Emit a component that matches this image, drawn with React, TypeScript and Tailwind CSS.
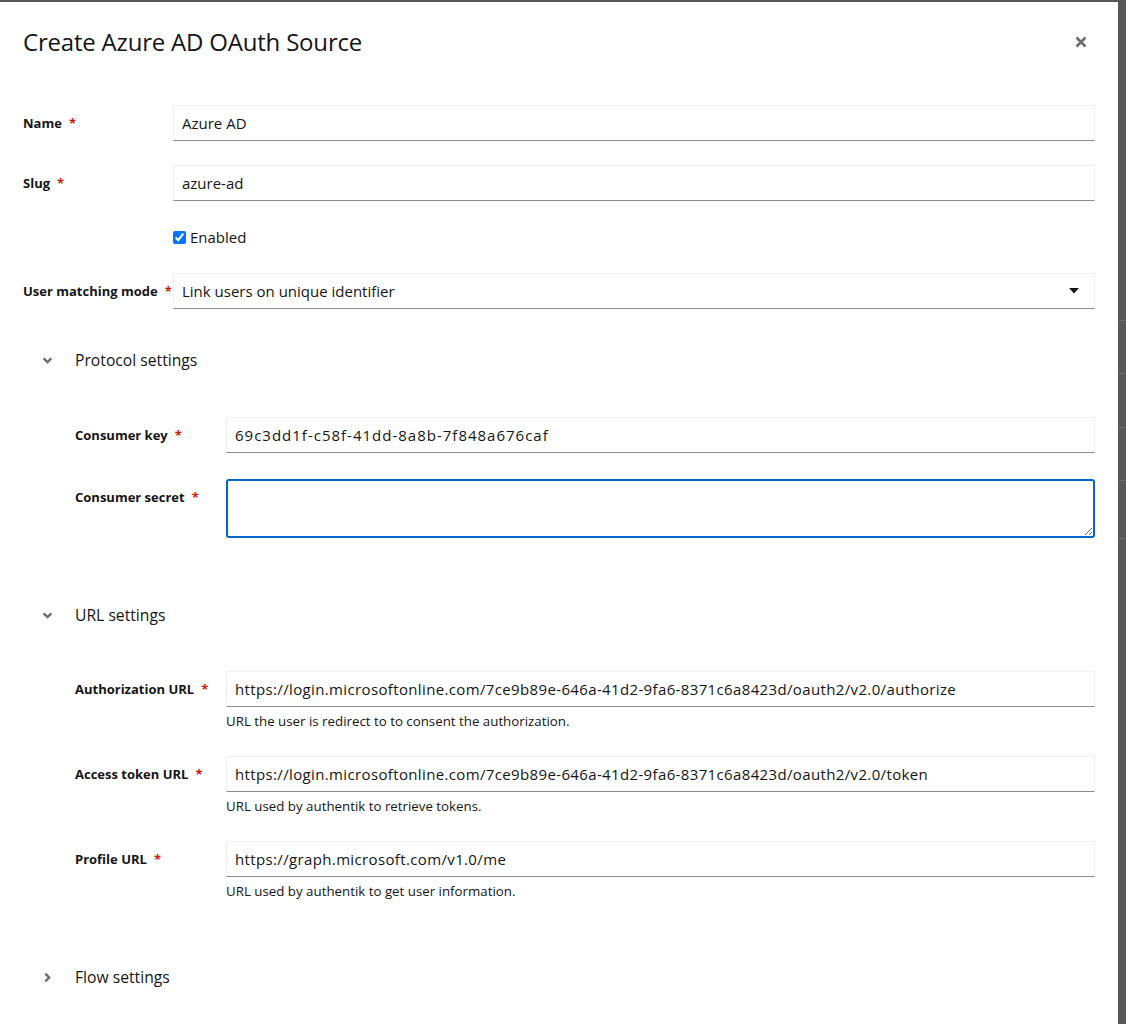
import { ReactNode } from "react";

const font = { fontFamily: '"Open Sans", "Liberation Sans", sans-serif' };

function Req() {
  return <span className="ml-[7px] text-[#c9190b]">*</span>;
}

function Label({ children, w }: { children: ReactNode; w: string }) {
  return (
    <div className={`${w} shrink-0 pt-2 text-[13px] font-bold leading-[20px] text-[#151515]`}>
      {children}
      <Req />
    </div>
  );
}

function TextInput({ value, track = "" }: { value: string; track?: string }) {
  return (
    <div
      className={`flex h-[36px] w-full items-center border border-[#f0f0f0] border-b-[#8a8d90] px-2 text-[15px] text-[#151515] ${track}`}
    >
      {value}
    </div>
  );
}

function Helper({ children }: { children: ReactNode }) {
  return <div className="mt-[5px] text-[13.3px] leading-[18px] text-[#151515]">{children}</div>;
}

function Chevron({ open }: { open: boolean }) {
  return (
    <svg width="11" height="11" viewBox="0 0 10 10" className="text-[#6a6e73]">
      {open ? (
        <path d="M1.5 3 L5 6.5 L8.5 3" fill="none" stroke="currentColor" strokeWidth="2.2" />
      ) : (
        <path d="M3 1.5 L6.5 5 L3 8.5" fill="none" stroke="currentColor" strokeWidth="2.2" />
      )}
    </svg>
  );
}

function Section({ title, open }: { title: string; open: boolean }) {
  return (
    <div className="flex h-[36px] items-center pt-[1px]">
      <div className="flex w-[52px] justify-center pr-[4px]">
        <Chevron open={open} />
      </div>
      <span className="text-[15.7px] text-[#151515]">{title}</span>
    </div>
  );
}

function UrlRow({ label, value, help }: { label: string; value: string; help: string }) {
  return (
    <div className="flex">
      <Label w="w-[151px]">{label}</Label>
      <div className="flex min-w-0 flex-1 flex-col">
        <TextInput value={value} track="tracking-[0.36px]" />
        <Helper>{help}</Helper>
      </div>
    </div>
  );
}

export default function App() {
  return (
    <div className="flex h-[1024px] w-[1126px] bg-[#585858] pt-[2px]" style={font}>
      <div className="flex w-[1118px] flex-col bg-white px-[23px]">
        <div className="flex items-center justify-between pt-[22px]">
          <h1 className="text-[24px] font-medium leading-[36px] tracking-[-0.2px] text-[#151515]">
            Create Azure AD OAuth Source
          </h1>
          <svg width="12" height="12" viewBox="0 0 12 12" className="mr-[8px] text-[#6a6e73]">
            <path d="M1.5 1.5 L10.5 10.5 M10.5 1.5 L1.5 10.5" stroke="currentColor" strokeWidth="2.6" />
          </svg>
        </div>

        <div className="mt-[45px] flex flex-col gap-6">
          <div className="flex">
            <Label w="w-[150px]">Name</Label>
            <TextInput value="Azure AD" />
          </div>
          <div className="flex">
            <Label w="w-[150px]">Slug</Label>
            <TextInput value="azure-ad" />
          </div>
          <div className="flex h-[24px] items-center pl-[150px]">
            <input type="checkbox" defaultChecked className="m-0 h-[13px] w-[13px] accent-[#0075ff]" />
            <span className="ml-[4px] text-[15px] text-[#151515]">Enabled</span>
          </div>
          <div className="flex">
            <Label w="w-[150px]">User matching mode</Label>
            <div className="flex h-[36px] flex-1 items-center justify-between border border-[#f0f0f0] border-b-[#8a8d90] pl-2 pr-[15px] text-[15px] text-[#151515]">
              <span>Link users on unique identifier</span>
              <svg width="10" height="6" viewBox="0 0 10 6">
                <path d="M0 0 H10 L5 5.5 Z" fill="#151515" />
              </svg>
            </div>
          </div>
        </div>

        <div className="mt-[33px]">
          <Section title="Protocol settings" open />
        </div>
        <div className="mt-[39px] flex flex-col gap-[26px] pl-[52px]">
          <div className="flex">
            <Label w="w-[151px]">Consumer key</Label>
            <TextInput value="69c3dd1f-c58f-41dd-8a8b-7f848a676caf" track="tracking-[1px]" />
          </div>
          <div className="flex">
            <Label w="w-[151px]">Consumer secret</Label>
            <textarea className="h-[59px] flex-1 rounded-[3px] border-2 border-[#0066cc] outline-none" />
          </div>
        </div>

        <div className="mt-[59px]">
          <Section title="URL settings" open />
        </div>
        <div className="mt-[38px] flex flex-col gap-[26px] pl-[52px]">
          <UrlRow
            label="Authorization URL"
            value="https://login.microsoftonline.com/7ce9b89e-646a-41d2-9fa6-8371c6a8423d/oauth2/v2.0/authorize"
            help="URL the user is redirect to to consent the authorization."
          />
          <UrlRow
            label="Access token URL"
            value="https://login.microsoftonline.com/7ce9b89e-646a-41d2-9fa6-8371c6a8423d/oauth2/v2.0/token"
            help="URL used by authentik to retrieve tokens."
          />
          <UrlRow
            label="Profile URL"
            value="https://graph.microsoft.com/v1.0/me"
            help="URL used by authentik to get user information."
          />
        </div>

        <div className="mt-[59px]">
          <Section title="Flow settings" open={false} />
        </div>
      </div>
      <div className="flex w-[8px] flex-col">
        <div className="h-[318px]" />
        <div className="h-[53px] border-t border-[#6e6e6e]" />
        <div className="h-[54px] border-t border-[#6e6e6e]" />
        <div className="h-[53px] border-t border-[#6e6e6e]" />
        <div className="h-[58px] border-t border-[#6e6e6e]" />
        <div className="border-t border-[#6e6e6e]" />
      </div>
    </div>
  );
}
